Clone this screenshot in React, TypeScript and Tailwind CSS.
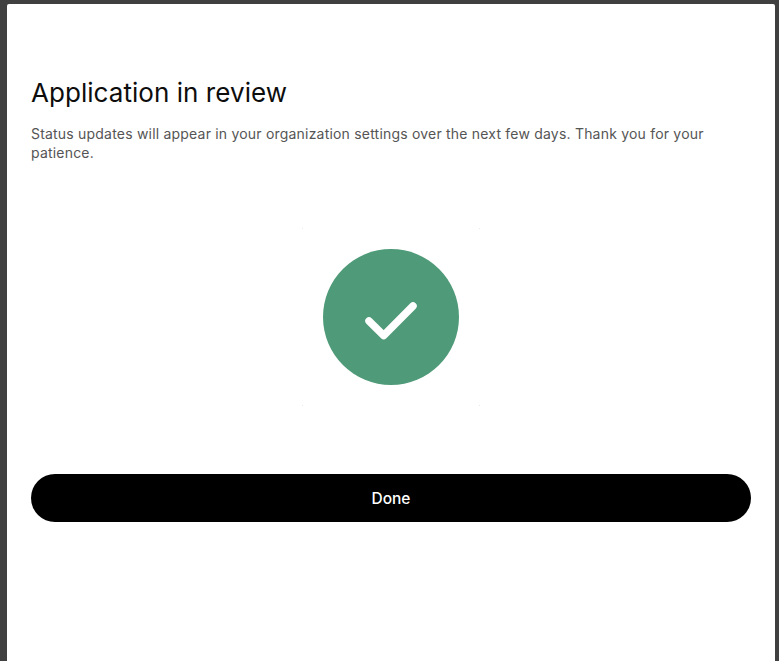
export default function App() {
  return (
    <div className="h-[661px] w-[779px] overflow-hidden bg-[#404040] pl-[7px] pr-[4px] pt-[4px] font-['Inter',sans-serif]">
      <div className="flex h-[657px] flex-col rounded-t-[2px] bg-white px-[24px] pt-[71px]">
        <h1 className="text-[26px] leading-[36px] font-normal tracking-[0.05px] text-[#0d0d0d]">Application in review</h1>
        <p className="mt-[13px] text-[14px] leading-[19px] tracking-[0.2px] text-[#555555]">
          Status updates will appear in your organization settings over the next few days. Thank you for your patience.
        </p>
        <div className="mt-[66px] flex justify-center">
          <svg width="178" height="178" viewBox="0 0 178 178" fill="none">
            <path d="M0 0.5h1M177 0.5h1M0 177.5h1M177 177.5h1" stroke="#e8e8e8" strokeWidth="1" />
            <circle cx="89" cy="89" r="68" fill="#4f9a78" />
            <path d="M67 93 L81.7 107.5 L111 78" stroke="#ffffff" strokeWidth="7.5" strokeLinecap="round" strokeLinejoin="round" />
          </svg>
        </div>
        <button className="mt-[68px] h-[48px] w-full rounded-full bg-black pt-[1px] text-[15.5px] font-medium text-white">Done</button>
      </div>
    </div>
  );
}
